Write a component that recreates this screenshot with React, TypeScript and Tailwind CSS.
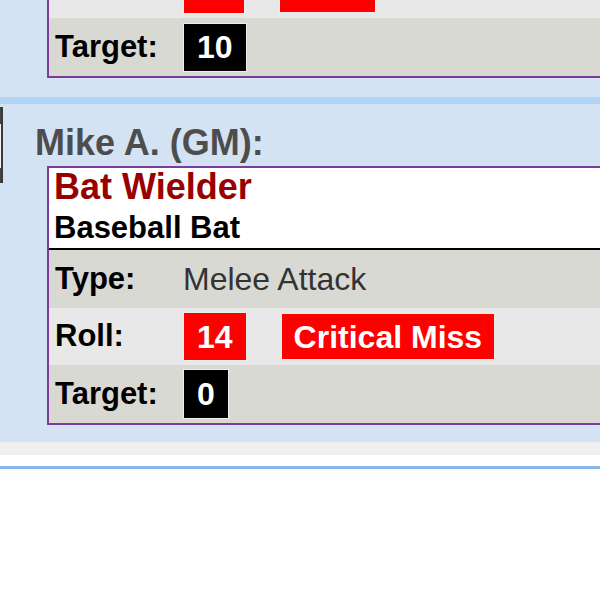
import React from "react";

type Badge = { text: string; tone: "red" | "black"; h?: string; px?: string };

const Pill: React.FC<{ badge: Badge }> = ({ badge }) => (
  <div
    className={`flex items-center justify-center border border-[#eeeeee] font-bold text-[32px] leading-none text-white ${
      badge.tone === "red" ? "bg-[#ff0000]" : "bg-black"
    } ${badge.h ?? "h-[49px]"} ${badge.px ?? "px-[13px]"}`}
  >
    {badge.text}
  </div>
);

const Row: React.FC<{ label: string; light?: boolean; h: string; children: React.ReactNode }> = ({
  label,
  light,
  h,
  children,
}) => (
  <div className={`flex items-center ${h} ${light ? "bg-[#e8e8e8]" : "bg-[#d9d9d4]"}`}>
    <div className="w-[134px] shrink-0 pl-[6px] text-[31px] font-bold text-black">{label}</div>
    <div className="flex items-center gap-[34px]">{children}</div>
  </div>
);

const App: React.FC = () => {
  return (
    <div className="w-[600px] h-[600px] overflow-hidden bg-white font-['Liberation_Sans',Arial,sans-serif]">
      {/* previous roll, scrolled mostly out of view */}
      <div className="bg-[#d3e3f4] pl-[47px] pb-[19px] mt-[-40px]">
        <div className="w-[600px] border-l-2 border-b-2 border-[#7d3c98]">
          <Row label="Roll:" light h="h-[58px]">
            <Pill badge={{ text: "11", tone: "red" }} />
            <Pill badge={{ text: "Miss", tone: "red", h: "h-[47px]", px: "px-[12px]" }} />
          </Row>
          <Row label="Target:" h="h-[58px]">
            <Pill badge={{ text: "10", tone: "black" }} />
          </Row>
        </div>
      </div>

      <div className="h-[7px] bg-[#afd4f6]" />

      <div className="relative bg-[#d3e3f4] pt-[19px] pl-[35px] pb-[17px]">
        {/* edge of avatar */}
        <div className="absolute left-0 top-[3px] flex h-[76px] w-[3px]">
          <div className="w-[1px] [background:linear-gradient(#444_0_22%,#f4f4f4_22%_80%,#444_80%)]" />
          <div className="w-[2px] bg-[#3a3a3a]" />
        </div>

        <div className="text-[36px] leading-[40px] font-bold text-[#4d4d4d]">Mike A. (GM):</div>

        <div className="mt-[3px] ml-[12px] w-[600px] border-l-2 border-t-2 border-b-2 border-[#7d3c98]">
          <div className="bg-white pl-[5px] pb-[3px] border-b-2 border-black">
            <div className="text-[36px] leading-[38px] font-bold text-[#990000]">Bat Wielder</div>
            <div className="mt-[5px] text-[31px] leading-[34px] font-bold text-black">Baseball Bat</div>
          </div>
          <Row label="Type:" h="h-[58px]">
            <span className="text-[32px] text-[#333]">Melee Attack</span>
          </Row>
          <Row label="Roll:" light h="h-[57px]">
            <Pill badge={{ text: "14", tone: "red" }} />
            <Pill badge={{ text: "Critical Miss", tone: "red", h: "h-[47px]", px: "px-[12px]" }} />
          </Row>
          <Row label="Target:" h="h-[58px]">
            <Pill badge={{ text: "0", tone: "black", h: "h-[50px]" }} />
          </Row>
        </div>
      </div>

      <div className="h-[13px] bg-[#efefef]" />
      <div className="h-[11px] bg-white" />
      <div className="h-[3px] bg-[#8cb4ec]" />
    </div>
  );
};

export default App;
